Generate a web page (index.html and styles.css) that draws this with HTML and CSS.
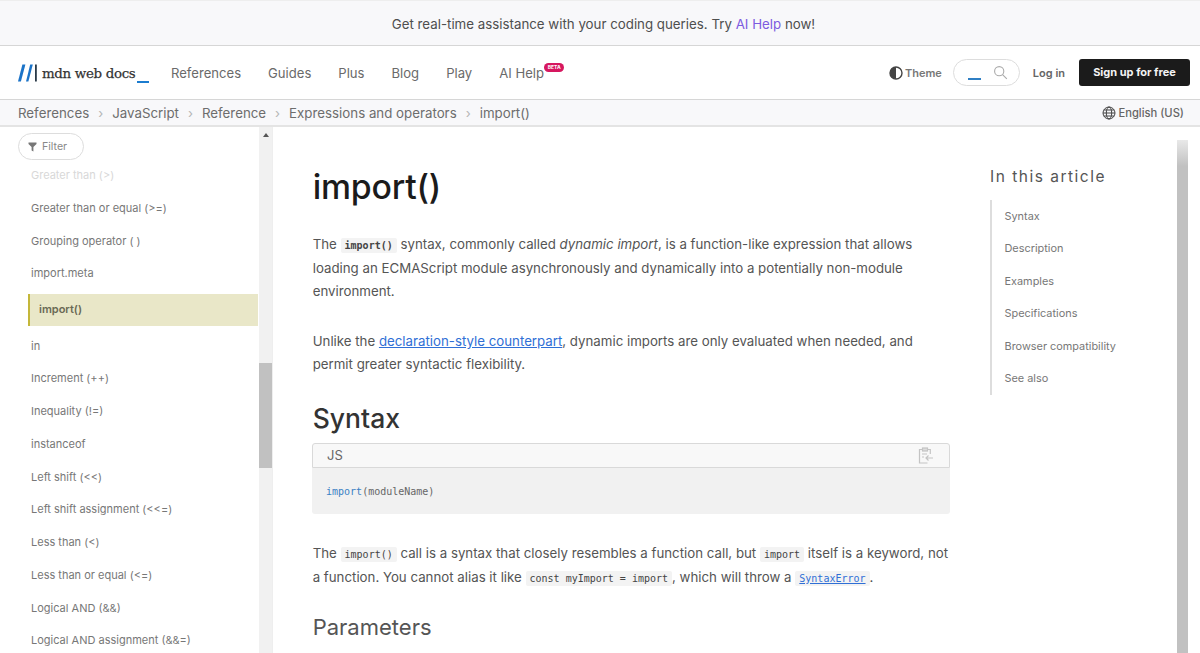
FILE: index.html
```html
<!DOCTYPE html>
<html lang="en">
<head>
<meta charset="utf-8">
<title>import() - JavaScript | MDN</title>
<link rel="stylesheet" href="styles.css">
</head>
<body>
<div class="banner">Get real-time assistance with your coding queries. Try <a href="#">AI Help</a> now!</div>
<header class="nav">
  <a class="logo" href="#">
    <svg class="logo-m" width="21" height="18" viewBox="0 0 21 18"><path d="M0 17.5 4.4.5h3L2.9 17.5z" fill="#1b73c8"/><path d="M8 17.5 12.2.5h2.6L10.4 17.5z" fill="#1b73c8"/><rect x="17" y=".5" width="1.8" height="17" fill="#2a3a48"/></svg>
    <span class="logo-text">mdn web docs</span><span class="logo-us"></span>
  </a>
  <nav class="menu">
    <a href="#">References</a><a href="#">Guides</a><a href="#">Plus</a><a href="#">Blog</a><a href="#">Play</a>
    <a class="ai" href="#">AI Help<span class="beta">BETA</span></a>
  </nav>
  <div class="actions">
    <span class="theme"><svg width="14" height="14" viewBox="0 0 14 14"><circle cx="7" cy="7" r="6" fill="none" stroke="#444" stroke-width="1.4"/><path d="M7 1a6 6 0 0 0 0 12z" fill="#444"/></svg>Theme</span>
    <span class="search"><span class="cursor"></span><svg width="15" height="15" viewBox="0 0 15 15"><circle cx="6.2" cy="6.2" r="4.6" fill="none" stroke="#aaa" stroke-width="1.1"/><path d="m9.6 9.6 4.2 4.2" stroke="#aaa" stroke-width="1.1"/></svg></span>
    <a class="login" href="#">Log in</a>
    <a class="signup" href="#">Sign up for free</a>
  </div>
</header>
<div class="crumbs">
  <ol>
    <li><a href="#">References</a></li><li><a href="#">JavaScript</a></li><li><a href="#">Reference</a></li><li><a href="#">Expressions and operators</a></li><li><a href="#">import()</a></li>
  </ol>
  <span class="lang"><svg width="14" height="14" viewBox="0 0 14 14" fill="none" stroke="#444" stroke-width="1"><circle cx="7" cy="7" r="6"/><ellipse cx="7" cy="7" rx="2.7" ry="6"/><path d="M1 7h12M1.8 4h10.4M1.8 10h10.4"/></svg>English (US)</span>
</div>
<div class="page">
  <aside class="side">
    <div class="side-list">
      <button class="filter"><svg width="9" height="10" viewBox="0 0 9 10"><path d="M.5.5h8v1.4L5.4 5v4.5L3.6 8.4V5L.5 1.9z" fill="#777"/></svg>Filter</button>
      <ul>
        <li class="faded">Greater than (&gt;)</li>
        <li>Greater than or equal (&gt;=)</li>
        <li>Grouping operator ( )</li>
        <li>import.meta</li>
        <li class="active">import()</li>
        <li>in</li>
        <li>Increment (++)</li>
        <li>Inequality (!=)</li>
        <li>instanceof</li>
        <li>Left shift (&lt;&lt;)</li>
        <li>Left shift assignment (&lt;&lt;=)</li>
        <li>Less than (&lt;)</li>
        <li>Less than or equal (&lt;=)</li>
        <li>Logical AND (&amp;&amp;)</li>
        <li>Logical AND assignment (&amp;&amp;=)</li>
      </ul>
    </div>
    <div class="side-bar"><span class="arrow"></span><span class="side-thumb"></span></div>
  </aside>
  <main class="article">
    <h1>import()</h1>
    <p class="first">The <code>import()</code> syntax, commonly called <em>dynamic import</em>, is a function-like expression that allows loading an ECMAScript module asynchronously and dynamically into a potentially non-module environment.</p>
    <p class="second">Unlike the <a href="#">declaration-style counterpart</a>, dynamic imports are only evaluated when needed, and permit greater syntactic flexibility.</p>
    <h2>Syntax</h2>
    <div class="code">
      <div class="code-head">JS
        <svg width="16" height="17" viewBox="0 0 16 17" fill="none" stroke="#c4c4c4" stroke-width="1.2"><path d="M4.5 2.5H1.5v13.5h8"/><path d="M9.5 2.5h2.8V7"/><rect x="4.5" y="1" width="5" height="3" fill="#ddd"/><path d="M15 11H8m2.5-2.5L8 11l2.5 2.5"/><path d="M4 7h5M4 10h2"/></svg>
      </div>
      <pre><span class="kw">import</span>(moduleName)</pre>
    </div>
    <p class="third">The <code>import()</code> call is a syntax that closely resembles a function call, but <code>import</code> itself is a keyword, not a function. You cannot alias it like <code>const myImport = import</code>, which will throw a <a href="#"><code>SyntaxError</code></a>.</p>
    <h3>Parameters</h3>
  </main>
  <aside class="toc">
    <h2>In this article</h2>
    <ul>
      <li>Syntax</li><li>Description</li><li>Examples</li><li>Specifications</li><li>Browser compatibility</li><li>See also</li>
    </ul>
  </aside>
  <div class="page-bar"></div>
</div>
</body>
</html>
```
FILE: styles.css
```css
* { box-sizing: border-box; }
html, body { margin: 0; height: 653px; overflow: hidden; }
body { font-family: Inter, "Liberation Sans", sans-serif; color: #4a4a4a; background: #fff; }
a { color: inherit; text-decoration: none; }
ul, ol { list-style: none; margin: 0; padding: 0; }

.banner { height: 46px; padding-left: 7px; background: #f8f8fa; border-bottom: 1px solid #d6d6d6; border-top: 1px solid #eee; text-align: center; font-size: 13.3px; line-height: 46px; color: #4e4e4e; }
.banner a { color: #7d5be0; }

.nav { height: 54px; display: flex; align-items: center; padding: 0 10px 0 18px; border-bottom: 1px solid #d6d6d6; }
.logo { display: flex; align-items: center; width: 153px; position: relative; }
.logo-m { flex: none; }
.logo-text { font-family: "DejaVu Serif", "Liberation Serif", serif; font-size: 13.4px; letter-spacing: -.33px; font-weight: 400; color: #333; -webkit-text-stroke: .25px #333; margin-left: 3px; margin-top: 1px; white-space: nowrap; }
.logo-us { width: 12px; height: 2px; background: #1b7ccf; margin: 19px 0 0 2px; flex: none; }
.menu { display: flex; gap: 27px; font-size: 13.1px; color: #6a6a6a; align-items: center; }
.ai { position: relative; }
.beta { position: absolute; left: 45px; top: -2px; width: 20px; height: 9px; border-radius: 5px; background: #d6175f; color: #fff; font-size: 5px; font-weight: 700; line-height: 9px; text-align: center; }
.actions { margin-left: auto; display: flex; align-items: center; }
.theme { display: flex; align-items: center; gap: 2px; font-size: 11px; font-weight: 600; color: #777; }
.search { width: 67px; height: 27px; margin-left: 11px; border: 1px solid #ddd; border-radius: 14px; display: flex; align-items: center; padding-left: 14px; }
.search svg { flex: none; margin-left: 12px; }
.cursor { width: 13px; height: 2px; background: #2f7fc4; margin-top: 13px; flex: none; }
.login { font-size: 11px; font-weight: 600; color: #666; margin: 0 14px 0 13px; }
.signup { width: 111px; height: 27px; background: #1b1b1b; color: #f4f4f4; border-radius: 3px; font-size: 11px; font-weight: 700; line-height: 27px; text-align: center; }

.crumbs { height: 27px; background: #f8f8fa; border-bottom: 2px solid #e4e4e4; display: flex; align-items: center; justify-content: space-between; padding: 0 16px 0 18px; font-size: 13.3px; color: #6d6d6d; }
.crumbs ol { display: flex; }
.crumbs li + li::before { content: "›"; color: #b5b5b5; margin: 0 9px; font-size: 13px; }
.lang { display: flex; align-items: center; gap: 2px; font-size: 11.2px; font-weight: 500; color: #666; }

.page { height: 527px; display: flex; overflow: hidden; }
.side { width: 273px; flex: none; display: flex; border-right: 1px solid #eee; }
.side-list { width: 259px; padding: 6px 1px 0 28px; flex: none; }
.filter { width: 66px; height: 27px; margin-left: -10px; display: flex; align-items: center; gap: 5px; padding: 0 0 0 9px; border: 1px solid #ddd; border-radius: 14px; background: #fff; font: 400 10.6px Inter, sans-serif; color: #888; }
.side-list ul { margin-top: 6px; }
.side-list li { height: 32.75px; padding-left: 3px; line-height: 32.75px; font-size: 11px; color: #777; white-space: nowrap; }
.side-list li.faded { color: #d8d8d8; height: 32.6px; line-height: 33px; margin-top: -6.7px; }
.side-list li.active { height: 32px; margin: 3.5px 0 4px; padding-left: 9px; background: #e9e7c8; border-left: 2px solid #c4b73a; font-weight: 600; color: #6a6a55; line-height: 31px; }
.side-bar { width: 13px; flex: none; background: #f1f1f1; position: relative; }
.arrow { display: block; margin: 6px auto 0; width: 0; height: 0; border: 3px solid transparent; border-top: 0; border-bottom: 4px solid #555; }
.side-thumb { position: absolute; left: 0; top: 236px; width: 13px; height: 105px; background: #c1c1c1; }

.article { width: 638px; flex: none; margin-left: 39px; font-size: 13.28px; line-height: 23px; color: #555; }
.article h1, .article h2, .article h3, .article p { padding-left: .7px; }
h1 { margin: 37px 0 0; font-size: 33.8px; line-height: 45px; font-weight: 500; color: #1b1b1b; letter-spacing: -.2px; }
.article p { margin: 0; }
.article .first { margin-top: 24px; }
.article .second { margin-top: 27px; }
.article p a { color: #2f6fd6; text-decoration: underline; }
code { font-family: "DejaVu Sans Mono", "Liberation Mono", monospace; font-size: 10px; background: #f3f3f3; padding: 2px 4px; border-radius: 2px; color: #444; }
.first code { font-weight: 700; }
.article h2 { margin: 24px 0 0; font-size: 26.5px; line-height: 36px; font-weight: 500; color: #333; }
.code { margin-top: 7px; }
.code-head { height: 25px; display: flex; align-items: center; justify-content: space-between; padding: 0 15px 0 14px; background: #f8f8f8; border: 1px solid #d9d9d9; border-radius: 3px 3px 0 0; font-size: 13px; color: #666; }
.code pre { margin: 0; height: 46px; background: #f1f1f1; padding: 12px 14px 0; font-family: "DejaVu Sans Mono", "Liberation Mono", monospace; font-size: 10px; line-height: 23px; color: #666; border-radius: 0 0 3px 3px; }
.kw { color: #3a80c4; }
.article .third { margin-top: 28px; }
.third a code { color: #2f6fd6; }
h3 { margin: 21px 0 0; font-size: 22px; line-height: 32px; font-weight: 400; color: #555; }

.toc { width: 187px; flex: none; margin-left: 40px; padding-top: 41px; }
.toc h2 { margin: 0; font-size: 15.5px; line-height: 18px; font-weight: 400; letter-spacing: 1.5px; color: #555; white-space: nowrap; }
.toc ul { margin-top: 13.5px; border-left: 2px solid #ddd; padding: 0 0 0 12.5px; }
.toc li { height: 32.6px; line-height: 32.6px; font-size: 10.9px; color: #777; white-space: nowrap; }
.page-bar { flex: none; width: 11px; margin: 13px 0 0 0; background: linear-gradient(#e8e8e8, #c1c1c1 26px); }
```
